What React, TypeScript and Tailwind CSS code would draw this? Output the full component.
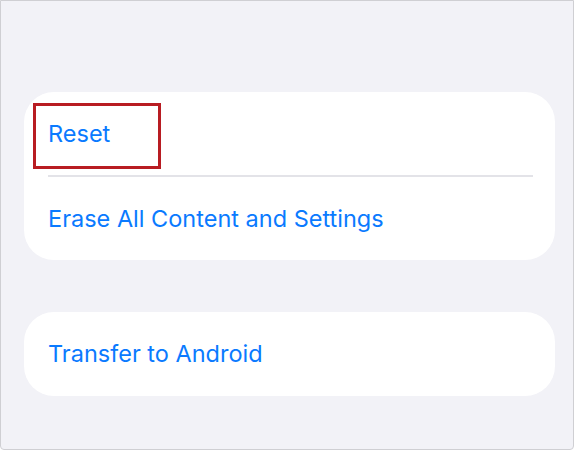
export default function App() {
  return (
    <div className="w-[574px] h-[450px] overflow-hidden bg-white">
      <div
        className="relative w-full h-full bg-[#f2f2f7] border border-[#cfcfd3] rounded-b-[4px] pt-[91px] pl-[23px] pr-[18px]"
        style={{ fontFamily: 'Inter, "Noto Sans", sans-serif' }}
      >
        <div className="bg-white rounded-[30px] overflow-hidden">
          <div className="h-[83px] flex items-center pl-[24px] text-[23.5px] text-[#0a7aff]">Reset</div>
          <div className="ml-[24px] mr-[22px] h-[2px] bg-[#e3e3e8]" />
          <div className="h-[83px] flex items-center pl-[24px] text-[23.5px] text-[#0a7aff]">
            Erase All Content and Settings
          </div>
        </div>
        <div className="mt-[52px] bg-white rounded-[30px] h-[84px] flex items-center pl-[24px] text-[23.5px] text-[#0a7aff]">
          Transfer to Android
        </div>
        <div className="absolute left-[32px] top-[102px] w-[128px] h-[66px] border-[3px] border-[#b81c22]" />
      </div>
    </div>
  );
}
